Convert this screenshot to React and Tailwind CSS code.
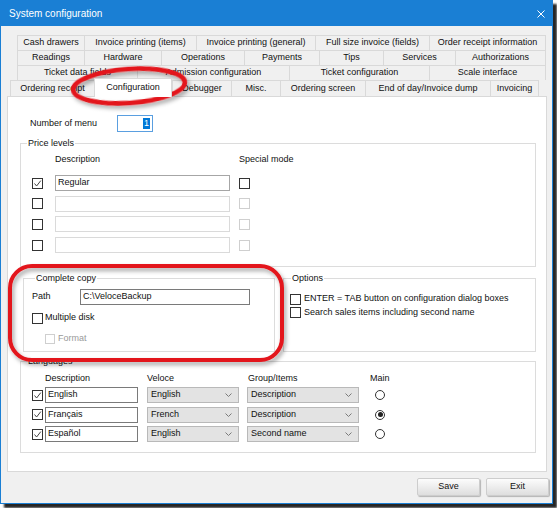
import React from 'react';

const TAB_ROWS = [
  {
    ml: 'ml-[16px]',
    tabs: [
      ['Cash drawers', 'w-[67px]'],
      ['Invoice printing (items)', 'w-[112px]'],
      ['Invoice printing (general)', 'w-[119px]'],
      ['Full size invoice (fields)', 'w-[114px]'],
      ['Order receipt information', 'w-[117px]'],
    ],
  },
  {
    ml: 'ml-[16px]',
    tabs: [
      ['Readings', 'w-[67px]'],
      ['Hardware', 'w-[77px]'],
      ['Operations', 'w-[83px]'],
      ['Payments', 'w-[75px]'],
      ['Tips', 'w-[64px]'],
      ['Services', 'w-[72px]'],
      ['Authorizations', 'w-[91px]'],
    ],
  },
  {
    ml: 'ml-[16px]',
    tabs: [
      ['Ticket data fields', 'w-[120px]'],
      ['Admission configuration', 'w-[152px]'],
      ['Ticket configuration', 'w-[140px]'],
      ['Scale interface', 'w-[117px]'],
    ],
  },
];

const BOTTOM_TABS = [
  ['Ordering receipt', 'w-[84px]'],
  ['Configuration', 'w-[78px]', true],
  ['Debugger', 'w-[59px]'],
  ['Misc.', 'w-[49px]'],
  ['Ordering screen', 'w-[85px]'],
  ['End of day/Invoice dump', 'w-[125px]'],
  ['Invoicing', 'w-[49px]'],
];

function Check({ checked, disabled, small }) {
  return (
    <span
      className={`flex shrink-0 items-center justify-center bg-white border ${
        small ? 'w-[10px] h-[10px]' : 'w-[11px] h-[11px]'
      } ${disabled ? 'border-[#cfcfcf]' : 'border-[#333333]'}`}
    >
      {checked && (
        <svg width="9" height="9" viewBox="0 0 9 9">
          <path d="M1.5 4.5 L3.6 7 L7.8 1.6" fill="none" stroke="#444" strokeWidth="1" />
        </svg>
      )}
    </span>
  );
}

function TextBox({ value, width, disabled, dark }) {
  return (
    <div
      className={`${width} h-[16px] shrink-0 bg-white border flex items-center pl-[2px] ${
        disabled ? 'border-[#dadada]' : dark ? 'border-[#7a7a7a]' : 'border-[#a6a6a6]'
      }`}
    >
      {value}
    </div>
  );
}

function Combo({ value, width }) {
  return (
    <div className={`${width} h-[16px] shrink-0 bg-[#e3e3e3] border border-[#b9b9b9] flex items-center justify-between pl-[3px] pr-[6px]`}>
      <span>{value}</span>
      <svg width="7" height="4" viewBox="0 0 7 4">
        <path d="M0.5 0.5 L3.5 3.5 L6.5 0.5" fill="none" stroke="#7a7a7a" strokeWidth="1" />
      </svg>
    </div>
  );
}

function Radio({ on }) {
  return (
    <span className="w-[10px] h-[10px] shrink-0 rounded-full border border-[#333] bg-white flex items-center justify-center">
      {on && <span className="w-[5px] h-[5px] rounded-full bg-[#222]" />}
    </span>
  );
}

function Legend({ children, className = '' }) {
  return <legend className={`px-[1px] leading-[11px] ${className}`}>{children}</legend>;
}

export default function App() {
  return (
    <div className="relative w-[557px] h-[508px] bg-white text-[9px] text-[#111] font-['Liberation_Sans',Arial,sans-serif]">
      <div className="w-[553px] h-[504px] flex flex-col bg-[#f0f0f0] border border-[#1a7fd4] shadow-[4px_4px_2px_rgba(0,0,0,0.85)]">
        {/* title bar */}
        <div className="h-[25px] shrink-0 bg-[#1a7fd4] flex items-center justify-between pl-[8px] pr-[7px] text-white text-[10px]">
          <span>System configuration</span>
          <svg width="8" height="8" viewBox="0 0 8 8">
            <path d="M0.5 0.5 L7.5 7.5 M7.5 0.5 L0.5 7.5" stroke="#fff" strokeWidth="1" />
          </svg>
        </div>

        {/* tabs */}
        <div className="pt-[9px] flex flex-col">
          {TAB_ROWS.map((row, i) => (
            <div key={i} className={`flex h-[15px] ${row.ml}`}>
              {row.tabs.map(([label, w], j) => (
                <div
                  key={label}
                  className={`${w} h-[15px] border-t border-l border-[#d9d9d9] ${
                    j === row.tabs.length - 1 ? 'border-r' : ''
                  } flex items-center justify-center whitespace-nowrap`}
                >
                  {label}
                </div>
              ))}
            </div>
          ))}
          <div className="flex h-[16px] ml-[9px] items-end">
            {BOTTOM_TABS.map(([label, w, sel], j) =>
              sel ? (
                <div
                  key={label}
                  className={`${w} h-[19px] -mb-[1px] relative z-10 bg-white border-t border-l border-r border-[#d9d9d9] flex items-center justify-center pb-[1px]`}
                >
                  {label}
                </div>
              ) : (
                <div
                  key={label}
                  className={`${w} h-[16px] border-t border-l border-[#d9d9d9] ${
                    j === BOTTOM_TABS.length - 1 ? 'border-r' : ''
                  } flex items-center justify-center whitespace-nowrap`}
                >
                  {label}
                </div>
              )
            )}
          </div>
        </div>

        {/* panel */}
        <div className="ml-[6px] w-[540px] h-[376px] shrink-0 bg-white border border-[#d9d9d9] flex flex-col">
          <div className="mt-[18px] h-[17px] flex items-center pl-[22px]">
            <span className="w-[87px]">Number of menu</span>
            <div className="w-[36px] h-[17px] border border-[#5a9fe0] flex items-center justify-end pr-[2px]">
              <span className="bg-[#0078d7] text-white leading-[11px] px-[1px]">1</span>
            </div>
          </div>

          {/* price levels */}
          <fieldset className="mt-[6px] ml-[12px] w-[516px] border border-[#dcdcdc] pt-[5px] pb-[13px]">
            <Legend className="ml-[6px]">Price levels</Legend>
            <div className="flex h-[12px] items-center pl-[34px]">
              <span className="w-[184px]">Description</span>
              <span>Special mode</span>
            </div>
            <div className="mt-[9px] flex flex-col gap-[4.7px]">
              {[
                ['Regular', true],
                ['', false],
                ['', false],
                ['', false],
              ].map(([v, first], i) => (
                <div key={i} className="flex items-center pl-[11px] h-[16px]">
                  <Check checked={first} />
                  <div className="ml-[12px]">
                    <TextBox value={v} width="w-[175px]" disabled={!first} />
                  </div>
                  <div className="ml-[9px]">
                    <Check disabled={!first} />
                  </div>
                </div>
              ))}
            </div>
          </fieldset>

          {/* complete copy + options */}
          <div className="mt-[6px] flex">
            <fieldset className="ml-[15px] w-[252px] border border-[#dcdcdc] pt-[5px] pb-[7px] pl-[8px]">
              <Legend className="ml-[3px]">Complete copy</Legend>
              <div className="flex items-center h-[16px]">
                <span className="w-[48px]">Path</span>
                <TextBox value="C:\VeloceBackup" width="w-[170px]" dark />
              </div>
              <div className="mt-[7px] flex items-center h-[12px] gap-[2px]">
                <Check />
                <span>Multiple disk</span>
              </div>
              <div className="mt-[10px] flex items-center h-[10px] gap-[3px] pl-[13px] text-[#9a9a9a]">
                <Check small disabled />
                <span>Format</span>
              </div>
            </fieldset>
            <fieldset className="ml-[8px] w-[253px] border border-[#dcdcdc] pt-[9px] pl-[6px] flex flex-col">
              <Legend className="ml-[1px]">Options</Legend>
              <div className="flex items-center h-[12px] gap-[3px]">
                <Check />
                <span>ENTER = TAB button on configuration dialog boxes</span>
              </div>
              <div className="mt-[1.5px] flex items-center h-[12px] gap-[3px]">
                <Check />
                <span>Search sales items including second name</span>
              </div>
            </fieldset>
          </div>

          {/* languages */}
          <fieldset className="mt-[4px] ml-[12px] w-[516px] border border-[#dcdcdc] pt-[6px] pb-[10px]">
            <Legend className="ml-[6px]">Languages</Legend>
            <div className="flex h-[12px] items-center pl-[24px]">
              <span className="w-[102px]">Description</span>
              <span className="w-[101px]">Veloce</span>
              <span className="w-[122px]">Group/Items</span>
              <span>Main</span>
            </div>
            <div className="mt-[2px] flex flex-col gap-[3.5px]">
              {[
                ['English', 'English', 'Description', false],
                ['Français', 'French', 'Description', true],
                ['Español', 'English', 'Second name', false],
              ].map(([d, v, g, on]) => (
                <div key={d} className="flex items-center h-[16px] pl-[11px]">
                  <Check checked />
                  <div className="ml-[2px]">
                    <TextBox value={d} width="w-[93px]" dark />
                  </div>
                  <div className="ml-[9px]">
                    <Combo value={v} width="w-[92px]" />
                  </div>
                  <div className="ml-[8px]">
                    <Combo value={g} width="w-[112px]" />
                  </div>
                  <div className="ml-[16px]">
                    <Radio on={on} />
                  </div>
                </div>
              ))}
            </div>
          </fieldset>
        </div>

        {/* buttons */}
        <div className="mt-[6px] flex justify-end gap-[6px] pr-[3px]">
          {['Save', 'Exit'].map((b) => (
            <div
              key={b}
              className="w-[63px] h-[18px] flex items-center justify-center rounded-[2px] border border-[#cdcdcd] bg-gradient-to-b from-[#fcfcfc] to-[#dedede] shadow-[1px_1px_1px_rgba(0,0,0,0.25)]"
            >
              {b}
            </div>
          ))}
        </div>
      </div>

      {/* red annotations */}
      <svg className="absolute inset-0 pointer-events-none" width="557" height="508" viewBox="0 0 557 508">
        <defs>
          <filter id="sh" x="-20%" y="-40%" width="140%" height="180%">
            <feDropShadow dx="2" dy="3" stdDeviation="2" floodColor="#000" floodOpacity="0.35" />
          </filter>
        </defs>
        <ellipse
          cx="129"
          cy="86"
          rx="56"
          ry="17"
          transform="rotate(-4 129 86)"
          fill="none"
          stroke="#e3141b"
          strokeWidth="4.5"
          filter="url(#sh)"
        />
        <rect x="10" y="266" width="272" height="94" rx="22" fill="none" stroke="#e3141b" strokeWidth="4" filter="url(#sh)" />
      </svg>
    </div>
  );
}
